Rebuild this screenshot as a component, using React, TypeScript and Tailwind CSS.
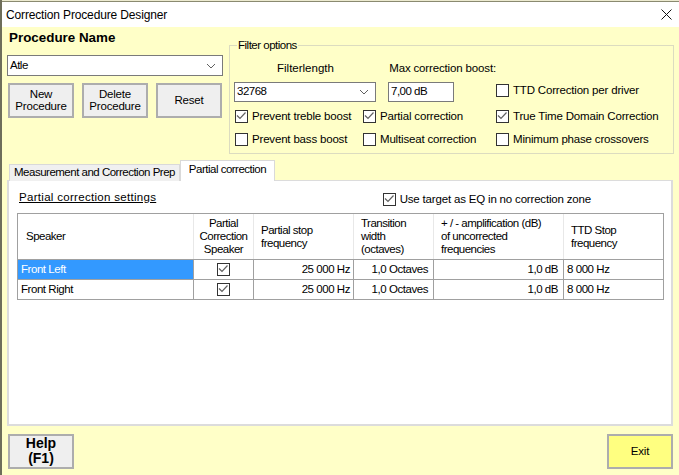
import React from "react";

const font = { fontFamily: '"Liberation Sans", sans-serif' };

function Check({ checked = false, label }: { checked?: boolean; label?: string }) {
  return (
    <div className="flex items-center gap-[4px] h-[13px]">
      <div className="w-[13px] h-[13px] border border-[#333333] bg-white shrink-0 flex items-center justify-center">
        {checked && (
          <svg width="11" height="11" viewBox="0 0 11 11" fill="none">
            <path d="M1 4.5 L4 7.5 L9.5 1.5" stroke="#606060" strokeWidth="1.2" />
          </svg>
        )}
      </div>
      {label && <span className="text-[11.5px] leading-[13px] tracking-[-0.18px] text-black whitespace-nowrap">{label}</span>}
    </div>
  );
}

function Chevron() {
  return (
    <svg width="10" height="6" viewBox="0 0 10 6" fill="none">
      <path d="M1 1 L5 5 L9 1" stroke="#606060" strokeWidth="1" />
    </svg>
  );
}

function Btn({ children, extra }: { children: React.ReactNode; extra?: string }) {
  return (
    <div className={`w-[66px] h-[35px] border-[2px] border-[#adadad] flex items-center justify-center pb-[1px] text-center text-[11.5px] leading-[12px] tracking-[-0.2px] text-black whitespace-nowrap ${extra ?? "bg-[#efefef]"}`}>
      <div>{children}</div>
    </div>
  );
}

function HeaderCell({ w, children, center }: { w: string; children: React.ReactNode; center?: boolean }) {
  return (
    <div className={`${w} h-full border-r border-[#e8e8e8] flex items-center leading-[13px] text-[11.5px] tracking-[-0.5px] text-black whitespace-nowrap ${center ? "justify-center text-center" : ""}`}>
      {children}
    </div>
  );
}

function Row({ name, selected, last }: { name: string; selected?: boolean; last?: boolean }) {
  return (
    <div className={`flex text-[11.5px] tracking-[-0.45px] text-black whitespace-nowrap ${last ? "h-[19px]" : "h-[20px] border-b border-[#a0a0a0]"}`}>
      <div className={`w-[176px] flex items-center pl-[3px] border-r border-[#a0a0a0] ${selected ? "bg-[#3399ff] text-white" : ""}`}>{name}</div>
      <div className="w-[60px] flex items-center justify-center border-r border-[#a0a0a0]"><Check checked /></div>
      <div className="w-[100px] flex items-center justify-end pr-[3px] border-r border-[#a0a0a0]">25 000 Hz</div>
      <div className="w-[80px] flex items-center justify-end pr-[5px] border-r border-[#a0a0a0]">1,0 Octaves</div>
      <div className="w-[130px] flex items-center justify-end pr-[5px] border-r border-[#a0a0a0]">1,0 dB</div>
      <div className="flex-1 flex items-center pl-[3px]">8 000 Hz</div>
    </div>
  );
}

export default function App() {
  return (
    <div style={font} className="w-[679px] h-[475px] overflow-hidden flex flex-col bg-[#ffffc8] relative border-l-[2px] border-[#6e6e5a]">
      <div className="h-[2px] bg-[#ecead0] border-b border-[#8a8a70] -ml-[2px]" />
      <div className="h-[25px] bg-white flex items-center justify-between pl-[4px] pr-[7px] shrink-0">
        <span className="text-[12px] tracking-[-0.15px] text-black">Correction Procedure Designer</span>
        <svg width="11" height="11" viewBox="0 0 11 11" fill="none"><path d="M0.5 0.5 L10.5 10.5 M10.5 0.5 L0.5 10.5" stroke="#111" strokeWidth="1" /></svg>
      </div>

      <div className="flex pl-[5px] pr-[3px]">
        <div className="w-[216px] shrink-0 flex flex-col">
          <div className="h-[28px] pl-[2px] pt-[2px] text-[13.4px] leading-[18px] font-bold text-black whitespace-nowrap">Procedure Name</div>
          <div className="h-[21px] border border-[#7a7a7a] bg-white flex items-center justify-between pl-[2px] pr-[6px] text-[11.5px] tracking-[-0.5px] text-black">
            <span>Atle</span><Chevron />
          </div>
          <div className="flex gap-[8px] mt-[7px] pl-[1px]">
            <Btn>New<br />Procedure</Btn>
            <Btn>Delete<br />Procedure</Btn>
            <Btn>Reset</Btn>
          </div>
        </div>

        <div className="relative ml-[6px] mt-[18px] w-[445px] h-[109px] border border-[#dcdcc0] flex pl-[4px]">
          <span className="absolute left-[7px] -top-[8px] bg-[#ffffc8] px-[1px] text-[11.5px] leading-[14px] tracking-[-0.5px] text-black whitespace-nowrap">Filter options</span>
          <div className="w-[262px] shrink-0 flex flex-col pt-[14px]">
            <div className="flex h-[22px] text-[11.5px] leading-[16px] text-black whitespace-nowrap">
              <div className="w-[156px] pl-[43px]">Filterlength</div>
              <div className="tracking-[-0.15px] pl-[1px]">Max correction boost:</div>
            </div>
            <div className="flex gap-[12px]">
              <div className="w-[142px] h-[20px] border border-[#7a7a7a] bg-white flex items-center justify-between pl-[2px] pr-[6px] text-[11.5px] tracking-[-0.5px] text-black">
                <span>32768</span><Chevron />
              </div>
              <div className="w-[66px] h-[20px] border border-[#7a7a7a] bg-white flex items-center pl-[2px] text-[11.5px] tracking-[-0.5px] text-black">7,00 dB</div>
            </div>
            <div className="flex mt-[8px] pl-[1px]">
              <div className="w-[128px] flex flex-col gap-[10px]">
                <Check checked label="Prevent treble boost" />
                <Check label="Prevent bass boost" />
              </div>
              <div className="flex flex-col gap-[10px]">
                <Check checked label="Partial correction" />
                <Check label="Multiseat correction" />
              </div>
            </div>
          </div>
          <div className="pt-[38px] flex flex-col gap-[13px]">
            <Check label="TTD Correction per driver" />
            <Check checked label="True Time Domain Correction" />
            <div className="-mt-[3px]"><Check label="Minimum phase crossovers" /></div>
          </div>
        </div>
      </div>

      <div className="flex items-end pl-[7px] mt-[6px] h-[21px] text-[11.5px] tracking-[-0.5px] text-black whitespace-nowrap relative z-10">
        <div className="w-[171px] h-[17px] bg-[#f0f0f0] border border-b-0 border-[#d9d9d9] flex items-center justify-center">Measurement and Correction Prep</div>
        <div className="w-[95px] h-[21px] bg-white border border-b-0 border-[#d9d9d9] flex items-center justify-center pb-[3px]">Partial correction</div>
      </div>

      <div className="ml-[5px] w-[666px] h-[246px] -mt-[1px] bg-white border-[2px] border-t border-[#dcdcdc] flex flex-col pl-[8px] pr-[7px]">
        <div className="flex h-[32px] items-center justify-between pr-[73px] pt-[4px] text-[11.5px] text-black whitespace-nowrap">
          <span className="underline ml-[2px] tracking-[0.3px] -mt-[3px]">Partial correction settings</span>
          <Check checked label="Use target as EQ in no correction zone" />
        </div>
        <div className="w-[647px] border border-[#a0a0a0]">
          <div className="flex h-[46px] border-b border-[#a0a0a0]">
            <HeaderCell w="w-[176px]"><span className="pl-[8px]">Speaker</span></HeaderCell>
            <HeaderCell w="w-[60px]" center>Partial<br />Correction<br />Speaker</HeaderCell>
            <HeaderCell w="w-[100px]"><span className="pl-[7px]">Partial stop<br />frequency</span></HeaderCell>
            <HeaderCell w="w-[80px]"><span className="pl-[7px]">Transition<br />width<br />(octaves)</span></HeaderCell>
            <HeaderCell w="w-[130px]"><span className="pl-[7px]">+ / - amplification (dB)<br />of uncorrected<br />frequencies</span></HeaderCell>
            <div className="flex-1 flex items-center pl-[7px] leading-[13px] text-[11.5px] tracking-[-0.5px] text-black whitespace-nowrap"><span>TTD Stop<br />frequency</span></div>
          </div>
          <Row name="Front Left" selected />
          <Row name="Front Right" last />
        </div>
      </div>

      <div className="flex justify-between pl-[6px] pr-[6px] mt-[8px]">
        <Btn><span className="font-bold text-[14px] leading-[15px] block tracking-normal">Help<br />(F1)</span></Btn>
        <Btn extra="bg-[#ffff80]">Exit</Btn>
      </div>
    </div>
  );
}
